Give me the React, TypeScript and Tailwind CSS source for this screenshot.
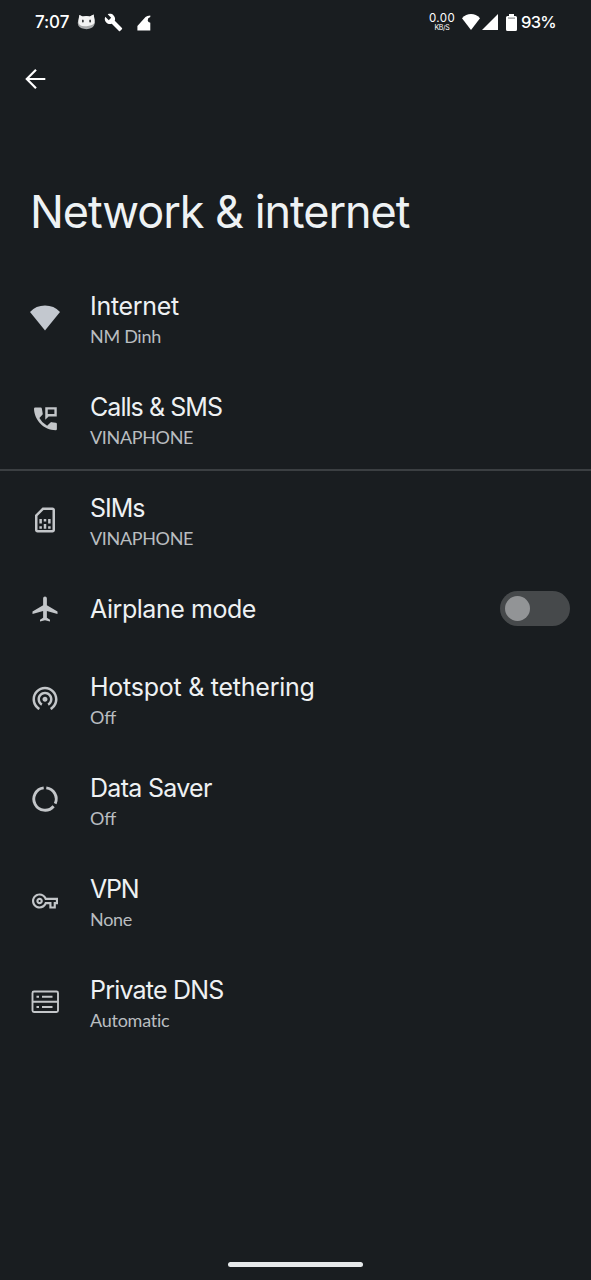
import type { ReactNode } from "react";
import {
  MdAirplanemodeActive,
  MdOutlineVpnKey,
  MdWifiTethering,
} from "react-icons/md";

const titleFont = "font-['Inter','Liberation_Sans',sans-serif]";
const subFont = "font-['Lato','Liberation_Sans',sans-serif]";

function WifiIcon() {
  return (
    <svg viewBox="0 0 30 30" className="size-[30px]" fill="#c3c8cf">
      <path d="M15 27.500 0 9Q6 2.600 15 2.600T30 9Z" />
    </svg>
  );
}

function CallsIcon() {
  return (
    <svg viewBox="0 0 24 24" className="size-[30px]" fill="currentColor">
      <path d="M20.600 15.800 17.300 15.300a1 1 0 0 0-.9.3l-2.700 2.600a14.600 14.600 0 0 1-6.200-6.200l2.400-2.600a1 1 0 0 0 .3-.9L9.500 4.500a1 1 0 0 0-1-.9H4.200a1 1 0 0 0-1 1C3.500 14 11 21.500 20.600 21.800a1 1 0 0 0 .9-1v-4a1 1 0 0 0-.9-1z" />
      <path
        fillRule="evenodd"
        d="M12.200 3.300h9.200v7.400h-6.500l-2.700 2.600zM14.200 5.200v3.500h5.300V5.200z"
      />
    </svg>
  );
}

function SimIcon() {
  return (
    <svg viewBox="0 0 24 24" className="size-[30px]" fill="currentColor">
      <path
        fillRule="evenodd"
        d="M18 2h-8L4 8v12c0 1.100.9 2 2 2h12c1.100 0 2-.9 2-2V4c0-1.100-.9-2-2-2zm0 18H6V8.830L10.830 4H18z"
      />
      <path d="M7.500 11.200h2v3.500h-2zM11 11.200h2v2h-2zM14.500 11.200h2v3.500h-2zM7.500 17h2v2h-2zM11 15.200h2V19h-2zM14.500 17h2v2h-2z" />
    </svg>
  );
}

function DataSaverIcon() {
  return (
    <svg viewBox="0 0 30 30" className="size-[30px]" fill="none" stroke="currentColor" strokeWidth="2.900">
      <path d="M16.300 3.900A11.200 11.200 0 0 1 25.200 19.700M23.600 22.200A11.200 11.200 0 1 1 13.700 3.900" />
    </svg>
  );
}

function DnsIcon() {
  return (
    <svg viewBox="0 0 30 30" className="size-[30px]" fill="none" stroke="currentColor" strokeWidth="1.900">
      <rect x="2.500" y="4.500" width="25.500" height="20.500" rx="1.500" />
      <path d="M2.500 14.800H28M12 9.800h10.500M12 20h10.500M6.500 9.800h2.500M6.500 20h2.500" />
    </svg>
  );
}

function Row({
  icon,
  title,
  titleClass,
  sub,
  subClass = "",
  iconClass = "pb-[3px]",
}: {
  icon: ReactNode;
  title: string;
  titleClass: string;
  sub: string;
  subClass?: string;
  iconClass?: string;
}) {
  return (
    <div className="flex h-[101px] items-center pl-[30px]">
      <div className={`flex h-full w-[60px] items-center text-[#c3c6c9] ${iconClass}`}>{icon}</div>
      <div className="pt-px">
        <div className={`${titleFont} whitespace-nowrap text-[25px] leading-[35px] text-[#eef1f3] ${titleClass}`}>
          {title}
        </div>
        <div className={`${subFont} -mt-[2px] whitespace-nowrap text-[18px] leading-[28px] text-[#b9bdc0] ${subClass}`}>
          {sub}
        </div>
      </div>
    </div>
  );
}

function StatusBar() {
  return (
    <div className={`${titleFont} flex h-[44px] items-center pl-[35px] pr-[35px] text-white`}>
      <span className="w-[42px] text-[17px] font-medium leading-5 tracking-[-0.1px]">7:07</span>
      <svg viewBox="0 0 20 16" className="h-4 w-[19px]">
        <path d="M2.500.5 6 2.200q4-1 7.500 0L17.500 0l1 6q1 3.500-.5 5.500-2 4-8 4T1.500 12Q0 9.500 1.500 6z" fill="#a9abac" />
        <path d="M2.500.5 6 2.200q4-1 7.500 0L17.500 0l1 6q.8 6-8.500 6.500T1.500 7z" fill="#f3f3f3" />
        <ellipse cx="6.200" cy="7" rx=".9" ry="1.600" fill="#202426" />
        <ellipse cx="13.800" cy="7" rx=".9" ry="1.600" fill="#202426" />
      </svg>
      <svg viewBox="0 0 24 24" className="ml-[8px] size-[19px]" fill="#fff">
        <path d="m22.700 19-9.100-9.100c.9-2.300.4-5-1.500-6.900-2-2-5-2.400-7.400-1.300L9 6 6 9 1.600 4.700C.4 7.100.9 10.100 2.900 12.100c1.900 1.900 4.600 2.400 6.900 1.500l9.100 9.100c.4.4 1 .4 1.400 0l2.300-2.300c.5-.4.5-1.100.1-1.400z" />
      </svg>
      <svg viewBox="0 0 14 16" className="ml-[14px] mt-[2px] h-4 w-[14px]" fill="#fff">
        <path d="M.4 15.500V11L8.500 2Q10 .5 13.300.5V2q-2.800 1-2.600 3.400.3 2 2.600 2.400V15.500z" />
      </svg>
      <div className="ml-auto flex items-center">
        <div className="w-[30px] text-center">
          <div className="text-[11.500px] leading-[12px] tracking-[0.400px]">0.00</div>
          <div className="text-[7px] leading-[8px] tracking-[-0.3px]">KB/S</div>
        </div>
        <svg viewBox="0 0 18 16" className="ml-[5px] h-4 w-[18px]" fill="#fff">
          <path d="M9 16 0 4.200Q4 0 9 0t9 4.200z" />
        </svg>
        <svg viewBox="0 0 16 16" className="ml-[2px] h-4 w-4" fill="#fff">
          <path d="M0 16 16 0v16z" />
        </svg>
        <svg viewBox="0 0 11 17" className="ml-[8px] h-[17px] w-[11px]" fill="#fff">
          <path d="M3 0h5v2h1.500Q11 2 11 3.500v12Q11 17 9.500 17h-8Q0 17 0 15.500v-12Q0 2 1.500 2H3z" />
          <path d="M2 3.600h7v1H2z" fill="#777b7d" />
        </svg>
        <span className="ml-[4px] w-[35px] whitespace-nowrap text-[16.500px] font-medium leading-5 tracking-[-0.7px]">
          93%
        </span>
      </div>
    </div>
  );
}

export default function App() {
  return (
    <div className="flex h-[1280px] w-[591px] flex-col overflow-hidden bg-[#191d20]">
      <StatusBar />
      <header className="h-[224px] pt-[24px]">
        <svg viewBox="0 0 22 22" className="ml-[25px] size-[22px]" fill="none" stroke="#fff" strokeWidth="2.200">
          <path d="M20.300 11H2M11 1.800 1.800 11l9.200 9.200" />
        </svg>
        <h1
          className={`${titleFont} ml-[30px] mt-[92px] whitespace-nowrap text-[45px] leading-[60px] tracking-[-1.050px] text-[#eef2f4]`}
        >
          Network &amp; internet
        </h1>
      </header>
      <main className="flex flex-col">
        <Row icon={<WifiIcon />} title="Internet" titleClass="tracking-[-0.300px]" sub="NM Dinh" subClass="tracking-[-0.300px]" iconClass="pb-px" />
        <Row icon={<CallsIcon />} title="Calls & SMS" titleClass="tracking-[-0.950px]" sub="VINAPHONE" subClass="tracking-[-0.350px]" />
        <div className="-mt-px -mb-px h-[2px] bg-[#3b3f42]" />
        <Row icon={<SimIcon />} title="SIMs" titleClass="tracking-[-1px]" sub="VINAPHONE" subClass="tracking-[-0.350px]" iconClass="pb-px" />
        <div className="flex h-[78px] items-center pb-[3px] pl-[30px] pr-[21px]">
          <div className="w-[60px] text-[#c3c6c9]">
            <MdAirplanemodeActive size={30} />
          </div>
          <div className={`${titleFont} text-[25px] leading-[34px] tracking-[-0.450px] text-[#eef1f3]`}>
            Airplane mode
          </div>
          <div className="ml-auto flex h-[35px] w-[70px] items-center rounded-full bg-[#46494b] pl-[5px]">
            <div className="size-[25px] rounded-full bg-[#929496]" />
          </div>
        </div>
        <Row icon={<MdWifiTethering size={30} />} title="Hotspot & tethering" titleClass="tracking-[-0.250px]" sub="Off" />
        <Row icon={<DataSaverIcon />} title="Data Saver" titleClass="tracking-[-0.700px]" sub="Off" />
        <Row icon={<MdOutlineVpnKey size={26} className="ml-[2px]" />} title="VPN" titleClass="tracking-[-1.200px]" sub="None" subClass="tracking-[-0.300px]" iconClass="pb-px" />
        <Row icon={<DnsIcon />} title="Private DNS" titleClass="tracking-[-0.800px]" sub="Automatic" subClass="tracking-[-0.250px]" iconClass="pb-px" />
      </main>
      <div className="mx-auto mb-[13px] mt-auto h-[5px] w-[135px] rounded-full bg-[#e6e9ea]" />
    </div>
  );
}
